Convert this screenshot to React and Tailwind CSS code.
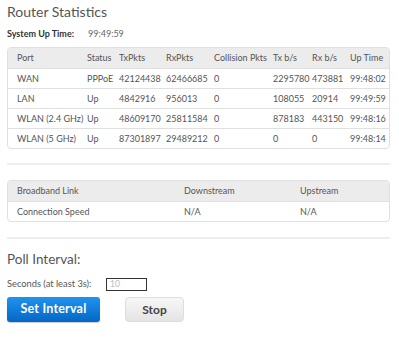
import React from "react";

const rows = [
  ["WAN", "PPPoE", "42124438", "62466685", "0", "2295780", "473881", "99:48:02"],
  ["LAN", "Up", "4842916", "956013", "0", "108055", "20914", "99:49:59"],
  ["WLAN (2.4 GHz)", "Up", "48609170", "25811584", "0", "878183", "443150", "99:48:16"],
  ["WLAN (5 GHz)", "Up", "87301897", "29489212", "0", "0", "0", "99:48:14"],
];
const head = ["Port", "Status", "TxPkts", "RxPkts", "Collision Pkts", "Tx b/s", "Rx b/s", "Up Time"];
const cols = "grid grid-cols-[70px_32px_47px_48px_59px_39px_38px_1fr] pl-[9px]";

export default function App() {
  return (
    <div className="w-[399px] h-[342px] bg-white text-[#555] pl-[7px] pr-[9px] overflow-hidden" style={{ fontFamily: "Lato, 'Open Sans', sans-serif" }}>
      <h1 className="text-[14px] leading-[20px] pt-[2px] text-[#555]">Router Statistics</h1>
      <div className="flex items-center h-[14px] mt-[5px] text-[9px]">
        <span className="font-bold text-[#333] w-[81px]">System Up Time:</span>
        <span className="text-[#666]">99:49:59</span>
      </div>
      <div className="mt-[6px] border border-[#e0e0e0] rounded-[4px] overflow-hidden text-[9px]">
        <div className={`${cols} bg-[#ececec] h-[20px] items-center`}>
          {head.map((h) => (
            <div key={h} className="whitespace-nowrap">{h}</div>
          ))}
        </div>
        {rows.map((r) => (
          <div key={r[0]} className={`${cols} h-[20px] items-center border-t border-[#e0e0e0]`}>
            {r.map((c, i) => (
              <div key={i} className="whitespace-nowrap">{c}</div>
            ))}
          </div>
        ))}
      </div>
      <div className="mt-[14px] h-[2px] bg-[#eeeeee]" />
      <div className="mt-[15px] border border-[#e0e0e0] rounded-[4px] overflow-hidden text-[9px]">
        <div className="grid grid-cols-[167px_116px_1fr] pl-[9px] bg-[#ececec] h-[20px] items-center">
          <div>Broadband Link</div>
          <div>Downstream</div>
          <div>Upstream</div>
        </div>
        <div className="grid grid-cols-[167px_116px_1fr] pl-[9px] h-[20px] items-center border-t border-[#e0e0e0]">
          <div>Connection Speed</div>
          <div>N/A</div>
          <div>N/A</div>
        </div>
      </div>
      <div className="mt-[15px] h-[2px] bg-[#eeeeee]" />
      <h2 className="text-[13.5px] leading-[20px] mt-[10px] text-[#555]">Poll Interval:</h2>
      <div className="flex items-center h-[14px] mt-[8px] text-[9.3px]">
        <span className="w-[99px]">Seconds (at least 3s):</span>
        <input
          defaultValue="10"
          className="w-[41px] h-[13px] border border-[#333] px-[3px] text-[8.5px] text-[#bbb] outline-none"
          style={{ fontFamily: "Lato, sans-serif" }}
        />
      </div>
      <div className="flex mt-[6px] gap-[25px]">
        <button className="w-[93px] h-[25px] rounded-[3px] bg-gradient-to-b from-[#1f93ee] to-[#0467c6] text-white text-[12.5px] font-bold tracking-[0.2px] shadow-[0_1px_1px_rgba(0,0,0,0.2)]">
          Set Interval
        </button>
        <button className="w-[59px] h-[25px] rounded-[4px] border border-[#ddd] bg-gradient-to-b from-[#f7f7f7] to-[#e4e4e4] text-[#444] text-[12px] font-bold">
          Stop
        </button>
      </div>
    </div>
  );
}
